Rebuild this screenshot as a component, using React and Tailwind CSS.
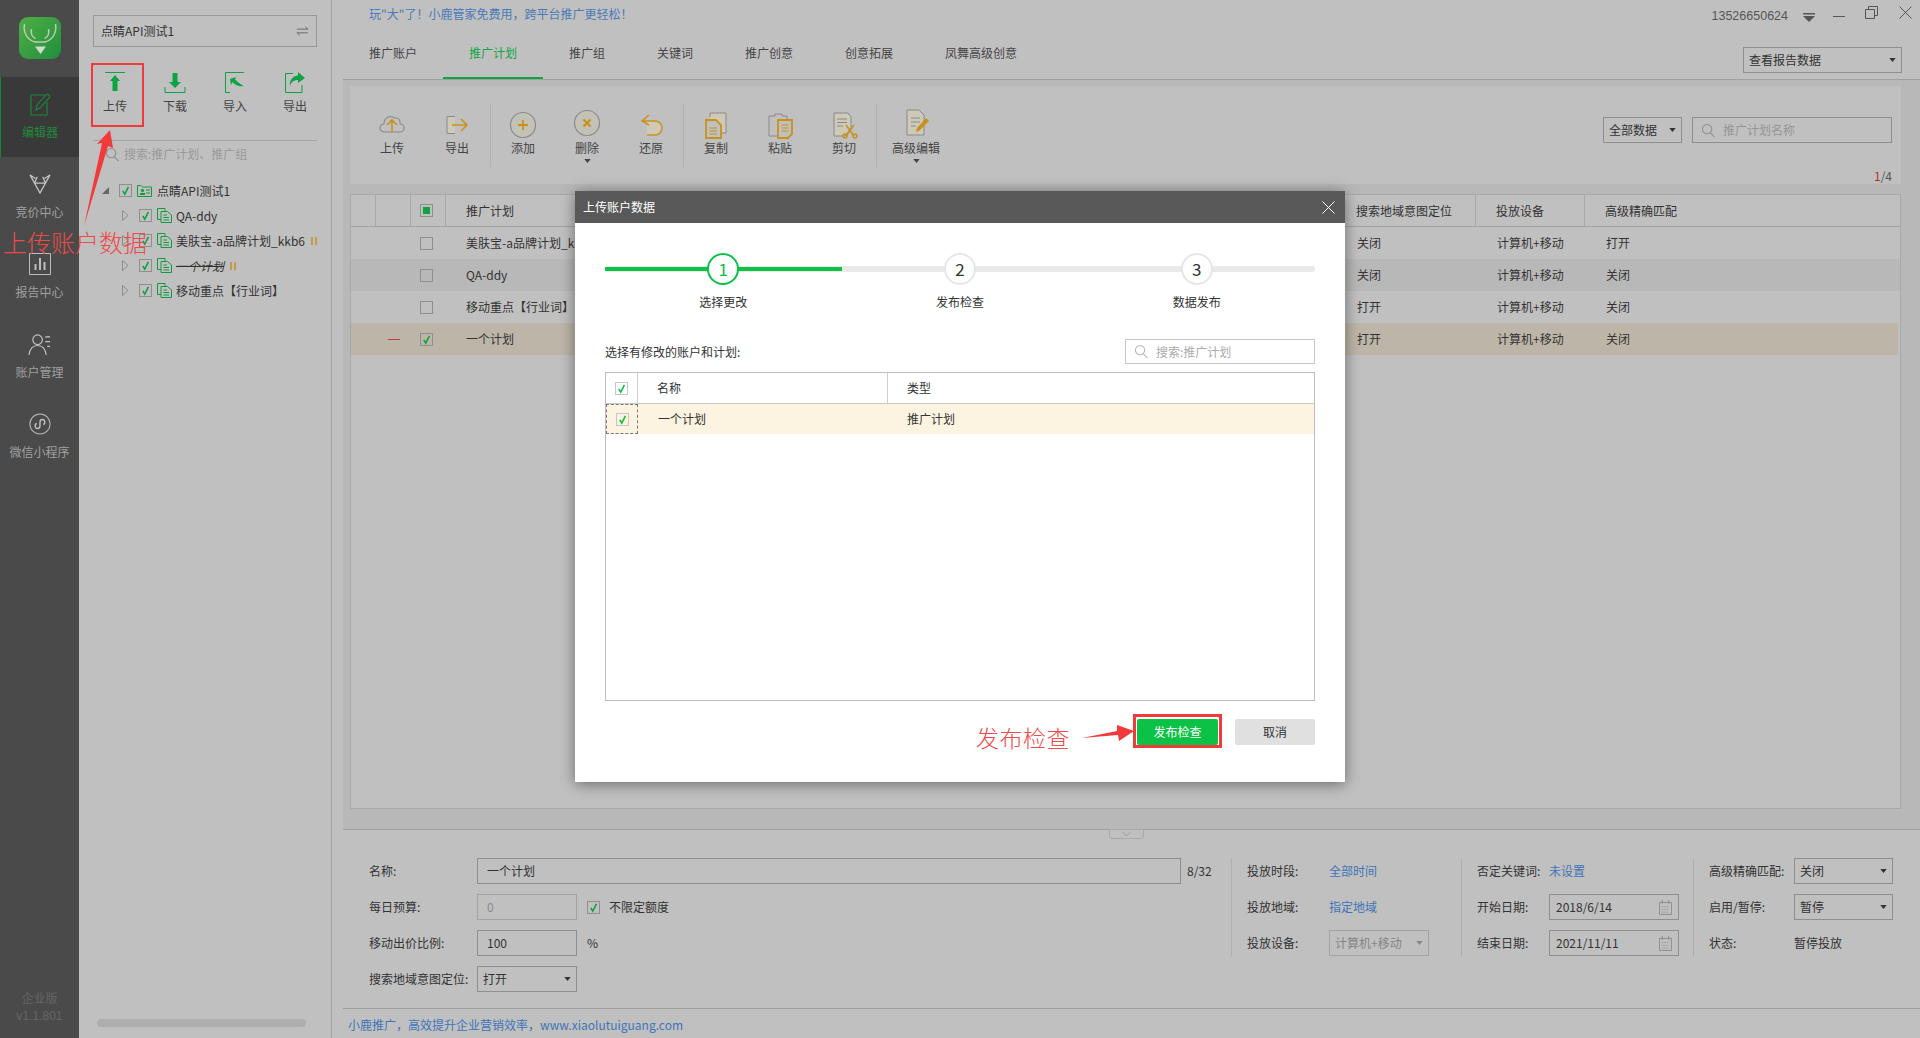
const Check = ({ color = "#0da342" }) => (
  <svg viewBox="0 0 12 12" className="h-full w-full" fill="none" aria-hidden>
    <path d="M3 6.5 L5.2 10 L9.2 2" stroke={color} strokeWidth="1.7" />
  </svg>
);

const Box = ({ checked, color, border = "border-[#8f8f8f]" }) => (
  <span className={`block h-[13px] w-[13px] shrink-0 border ${border}`}>
    {checked && <Check color={color} />}
  </span>
);

const Caret = ({ color = "#333" }) => (
  <svg viewBox="0 0 8 5" className="h-[4px] w-[7px]" aria-hidden>
    <path d="M0 0 H8 L4 5 Z" fill={color} />
  </svg>
);

const Lens = ({ color = "#8e8e8e" }) => (
  <svg viewBox="0 0 16 16" className="h-[15px] w-[15px] shrink-0" fill="none" stroke={color} strokeWidth="1.1" aria-hidden>
    <circle cx="6.5" cy="6.5" r="5" />
    <path d="M10 10.5 L14.5 15" />
  </svg>
);

const SideItem = ({ label, active, children }) => (
  <div className={`flex h-[80px] flex-col items-center pt-[14px] ${active ? "border-l border-[#128a3a] bg-[#393939] text-[#1f8a3c]" : "text-[#a0a0a0]"}`}>
    <div className="flex h-[26px] items-center justify-center">{children}</div>
    <div className="mt-[6px] whitespace-nowrap leading-[18px]">{label}</div>
  </div>
);

const Sidebar = () => (
  <aside className="flex w-[79px] shrink-0 flex-col bg-[#4a4a4a]">
    <div className="flex h-[77px] items-start justify-center pt-[17px]">
      <div className="h-[42px] w-[42px] overflow-hidden rounded-[9px] bg-linear-to-br from-[#4fae45] to-[#1c8f3c]">
        <svg viewBox="0 0 42 42" fill="none" className="h-full w-full" aria-hidden>
          <path d="M5.5 7 C4 15 8 23 16 25 M36.5 7 C38 15 34 23 26 25 M16 25 H26 M12.5 12 C11.5 17 13 20 16.5 21.5 M29.5 12 C30.5 17 29 20 25.5 21.5" stroke="#bccbb6" strokeWidth="1.5" />
          <path d="M16 29.5 H27 L21.5 37 Z" fill="#d3ddcf" />
        </svg>
      </div>
    </div>
    <SideItem label="编辑器" active>
      <svg viewBox="0 0 24 24" className="h-[24px] w-[24px]" fill="none" stroke="#1a8a3d" strokeWidth="1.1" aria-hidden>
        <path d="M19 10 V23 H3 V3 H17" />
        <path d="M8 18 L9 13 L18 3 C20 1 23 4 21 6 L12 16 Z" />
      </svg>
    </SideItem>
    <SideItem label="竞价中心">
      <svg viewBox="0 0 24 22" className="h-[20px] w-[24px]" fill="none" stroke="#c4c4c4" strokeWidth="1.4" aria-hidden>
        <path d="M1 1 L12 21 L23 1 M6 10 H18 M1 1 L7 5 M23 1 L17 5 M6 10 L9 3 M18 10 L15 3" />
      </svg>
    </SideItem>
    <SideItem label="报告中心">
      <svg viewBox="0 0 22 22" className="h-[22px] w-[22px]" fill="none" stroke="#bdbdbd" aria-hidden>
        <path d="M0.5 0.5 H21.5 V21.5 H0.5 Z" />
        <path d="M6.5 17 V11 M11 17 V5 M15.5 17 V9" strokeWidth="2" />
      </svg>
    </SideItem>
    <SideItem label="账户管理">
      <svg viewBox="0 0 24 24" className="h-[23px] w-[23px]" fill="none" stroke="#c4c4c4" strokeWidth="1.2" aria-hidden>
        <circle cx="10" cy="7" r="5" />
        <path d="M1 23 C2 15 6 13 10 13 C14 13 18 15 19 23 M18 4 H23 M18 9 H23 M20 14 H23" />
      </svg>
    </SideItem>
    <SideItem label="微信小程序">
      <svg viewBox="0 0 24 24" className="h-[22px] w-[22px]" fill="none" stroke="#bdbdbd" aria-hidden>
        <circle cx="12" cy="12" r="11" strokeWidth="1.1" />
        <path d="M8.5 11.5 C6 12 6 17 9.5 17 C11.5 17 12 15 12 14 V10 C12 9 12.5 7 14.5 7 C18 7 18 12 15.5 12.5" strokeWidth="1.6" />
      </svg>
    </SideItem>
    <div className="mt-auto pb-[12px] text-center text-[#666] leading-[19px]">
      <div>企业版</div>
      <div className="font-['Liberation_Sans',sans-serif]">v1.1.801</div>
    </div>
  </aside>
);

const ToolIcon = ({ children }) => (
  <svg viewBox="0 0 22 22" className="h-[22px] w-[22px]" fill="none" stroke="#0da342" aria-hidden>
    {children}
  </svg>
);

const SideTool = ({ label, children }) => (
  <div className="flex w-[60px] flex-col items-center">
    <ToolIcon>{children}</ToolIcon>
    <div className="mt-[3px] leading-[18px] text-[#444]">{label}</div>
  </div>
);

const TreeDoc = () => (
  <svg viewBox="0 0 15 15" className="h-[15px] w-[15px] shrink-0" fill="none" stroke="#129a42" aria-hidden>
    <path d="M4 11.5 H0.5 V0.5 H8 V3" />
    <path d="M4 3.5 H10.5 L14.5 7 V14.5 H4 Z M6.5 7 H10 M6.5 9.5 H12 M6.5 12 H12" />
  </svg>
);

const TreeRow = ({ children, pause }) => (
  <div className="flex h-[25px] items-center pl-[43px]">
    <svg viewBox="0 0 7 11" className="h-[11px] w-[7px] shrink-0" fill="none" stroke="#8c8c8c" aria-hidden>
      <path d="M0.5 0.5 L6 5.5 L0.5 10.5 Z" />
    </svg>
    <span className="ml-[10px]">
      <Box checked />
    </span>
    <span className="ml-[5px]">
      <TreeDoc />
    </span>
    <span className="ml-[4px] whitespace-nowrap">{children}</span>
    {pause && <span className="ml-[6px] h-[8px] w-[6px] shrink-0 border-x-2 border-[#c49a4a]" />}
  </div>
);

const Panel = () => (
  <section className="flex w-[253px] shrink-0 flex-col border-r border-[#a3a3a3] bg-[#c0c0c0] pt-[15px]">
    <div className="ml-[14px] flex h-[32px] w-[224px] items-center justify-between border border-[#989898] pl-[7px] pr-[7px]">
      <span>点睛API测试1</span>
      <svg viewBox="0 0 14 10" className="h-[10px] w-[13px]" fill="none" stroke="#666" aria-hidden>
        <path d="M1 3 H13 L10 0.5 M13 7 H1 L4 9.5" />
      </svg>
    </div>
    <div className="ml-[6px] mt-[25px] flex">
      <SideTool label="上传">
        <path d="M1 0.5 H21" />
        <path d="M11 3 L16 9 H13.5 V19 H8.5 V9 H6 Z" fill="#0da342" stroke="none" />
      </SideTool>
      <SideTool label="下载">
        <path d="M8.5 1 H13.5 V10 H17 L11 16 L5 10 H8.5 Z" fill="#0da342" stroke="none" />
        <path d="M1 15 V20.5 H21 V15" />
      </SideTool>
      <SideTool label="导入">
        <path d="M1.5 20.5 V0.5 H20 M1.5 20.5 H6" />
        <path d="M6 7 L12 5 L11 7.5 C14 10 17 13 20 14 C15 15 11 13 8.5 10 L7 13 Z" fill="#0da342" stroke="none" />
      </SideTool>
      <SideTool label="导出">
        <path d="M9 1.5 H1.5 V20.5 H18 V13" />
        <path d="M14 0 L21 6 L14 11 V8 C10 8 7 10 6 14 C5 8 9 4 14 3.5 Z" fill="#0da342" stroke="none" />
      </SideTool>
    </div>
    <div className="mx-[14px] mt-[25px] flex h-[27px] items-center gap-[4px] border-t border-[#a3a3a3] pl-[12px] text-[#999]">
      <Lens />
      <span className="whitespace-nowrap">搜索:推广计划、推广组</span>
    </div>
    <div className="mt-[11px]">
      <div className="flex h-[25px] items-center pl-[23px]">
        <span className="h-0 w-0 border-b-[7px] border-l-[7px] border-b-[#666] border-l-transparent" />
        <span className="ml-[10px]">
          <Box checked />
        </span>
        <svg viewBox="0 0 15 12" className="ml-[5px] h-[12px] w-[15px]" fill="none" stroke="#129a42" aria-hidden>
          <path d="M0.5 0.5 H4 L5.5 2 H14.5 V11.5 H0.5 Z M9 5 H13 M9 8 H13" />
          <circle cx="5.5" cy="5.5" r="1.2" fill="#129a42" />
          <path d="M3 9 H8" strokeWidth="2" />
        </svg>
        <span className="ml-[5px]">点睛API测试1</span>
      </div>
      <TreeRow>QA-ddy</TreeRow>
      <TreeRow pause>美肤宝-a品牌计划_kkb6</TreeRow>
      <TreeRow pause>
        <span className="italic line-through">一个计划</span>
      </TreeRow>
      <TreeRow>移动重点【行业词】</TreeRow>
    </div>
    <div className="mb-[11px] ml-[18px] mt-auto h-[8px] w-[209px] rounded-full bg-[#aeaeae]" />
  </section>
);

const Select = ({ label, width = "w-[100px]", disabled }) => (
  <div className={`flex h-[26px] shrink-0 items-center justify-between border px-[5px] ${width} ${disabled ? "border-[#a3a3a3] text-[#858585]" : "border-[#8f8f8f]"}`}>
    <span className="whitespace-nowrap">{label}</span>
    <Caret color={disabled ? "#858585" : "#333"} />
  </div>
);

const Tools = ({ label, caret, width = "w-[64px]", up, children }) => (
  <div className={`relative flex h-[64px] shrink-0 flex-col items-center pt-[8px] ${width}`}>
    <svg viewBox="0 0 28 28" className={`h-[28px] w-[28px] ${up ? "-mt-[2px]" : ""}`} fill="none" aria-hidden>
      {children}
    </svg>
    <div className={`whitespace-nowrap leading-[18px] text-[#444] ${up ? "mt-[2px]" : ""}`}>{label}</div>
    {caret && (
      <div className="mt-[2px] flex justify-center">
        <Caret color="#444" />
      </div>
    )}
  </div>
);

const Sep = () => <div className="h-[64px] w-px shrink-0 bg-[#b2b2b2]" />;

const G = "#8a8a8a";
const Y = "#c8921a";
const B = "#cfc9b8";

const Toolbar = () => (
  <div className="flex h-[98px] shrink-0 bg-[#c0c0c0] pl-[10px] pr-[9px]">
    <div className="mt-[17px] flex h-[64px]">
      <Tools label="上传">
        <path d="M7 22 C1 22 0 15 6 14 C6 7 13 5 16 8 C20 7 23 10 22 14 C27 14 28 22 22 22 Z" stroke={G} strokeWidth="1.1" transform="translate(0 -1)" />
        <path d="M14 21 V10 M9 14 L14 9 L19 14" stroke={Y} strokeWidth="1.6" />
      </Tools>
      <Tools label="导出" width="w-[66px]">
        <path d="M4 5.5 H12 V22.5 H4 Z" fill={B} stroke="none" />
        <path d="M12 5.5 H4 V22.5 H12" stroke={G} />
        <path d="M9 14 H23 M18 8 L24 14 L18 20" stroke={Y} strokeWidth="1.6" />
      </Tools>
      <Sep />
      <Tools label="添加">
        <circle cx="14" cy="14" r="12.5" stroke={G} strokeWidth="1.2" fill="#c4c1b6" />
        <path d="M14 9 V19 M9 14 H19" stroke={Y} strokeWidth="1.8" />
      </Tools>
      <Tools label="删除" caret up>
        <circle cx="14" cy="14" r="12.5" stroke={G} strokeWidth="1.2" fill="#c4c1b6" />
        <path d="M10.5 10.5 L17.5 17.5 M17.5 10.5 L10.5 17.5" stroke={Y} strokeWidth="2.2" />
      </Tools>
      <Tools label="还原">
        <path d="M9 11 H18 C23 11 24 15 24 17 C24 21 21 24 18 24 H10 V11 Z" fill={B} stroke="none" />
        <path d="M12 4 L5 10 L12 14 M5 10 H18 C22 10 25 13 25 17 C25 21 22 24 18 24 H10" stroke={Y} strokeWidth="1.5" />
      </Tools>
      <Sep />
      <Tools label="复制">
        <path d="M8 2 H24 V22 H8 Z" fill={B} stroke="none" />
        <path d="M8 6 V2 H24 V22 H20" stroke={G} />
        <path d="M4 9 H14 L19 14 V27 H4 Z" fill="#c0c0c0" stroke={Y} strokeWidth="1.8" />
        <path d="M7.5 17 H15 M7.5 20 H15 M7.5 23 H15" stroke={Y} />
      </Tools>
      <Tools label="粘贴">
        <path d="M3 5 H9 V3 H16 V5 H21 V9 H12 V25 H3 Z" stroke={G} />
        <path d="M12 9 H26 V23 L22 27 H12 Z" fill="#c0c0c0" stroke={Y} strokeWidth="1.8" />
        <path d="M15.5 14 H22.5 M15.5 17 H22.5 M15.5 20 H22.5" stroke={Y} />
      </Tools>
      <Tools label="剪切">
        <path d="M4 2 H18 L21 6 V17 L15 25 H4 Z" fill={B} stroke={G} />
        <path d="M7 8 H17 M7 11.5 H17 M7 15 H13" stroke={G} />
        <path d="M16 14 L24 25 M24 14 L16 25" stroke={Y} strokeWidth="1.5" />
        <circle cx="15" cy="25" r="2" stroke={Y} strokeWidth="1.4" />
        <circle cx="25" cy="25" r="2" stroke={Y} strokeWidth="1.4" />
      </Tools>
      <Sep />
      <Tools label="高级编辑" caret up width="w-[78px]">
        <path d="M5 1 H17 L22 6 V26 H5 Z" fill={B} stroke={G} />
        <path d="M9 9 H18 M9 13 H18 M9 17 H14" stroke={G} />
        <path d="M14 23 L15 19 L24 9 L27 12 L17 22 Z" fill={Y} />
      </Tools>
    </div>
    <div className="ml-auto flex flex-col items-end pt-[31px]">
      <div className="flex gap-[10px]">
        <Select label="全部数据" width="w-[79px]" />
        <div className="flex h-[26px] w-[200px] items-center gap-[7px] border border-[#8f8f8f] pl-[8px] text-[#969696]">
          <Lens />
          <span>推广计划名称</span>
        </div>
      </div>
      <div className="mt-[24px] leading-[18px] text-[#555]">
        <span className="text-[#a33]">1</span>/4
      </div>
    </div>
  </div>
);

const plans = [
  { name: "美肤宝-a品牌计划_kkb6", a: "关闭", b: "打开" },
  { name: "QA-ddy", a: "关闭", b: "关闭", bg: "bg-[#b8b8b8]" },
  { name: "移动重点【行业词】", a: "打开", b: "关闭" },
  { name: "一个计划", a: "打开", b: "关闭", bg: "bg-[#bdb6a8]", on: true },
];

const PlanTable = () => (
  <div className="mt-[10px] flex h-[615px] flex-col border border-[#a9a9a9] bg-[#c0c0c0]">
    <div className="flex h-[32px] shrink-0 border-b border-[#a3a3a3]">
      <div className="w-[25px] border-r border-[#a9a9a9]" />
      <div className="w-[35px] border-r border-[#a9a9a9]" />
      <div className="flex w-[35px] items-center border-r border-[#a9a9a9] pl-[9px]">
        <span className="flex h-[13px] w-[13px] items-center justify-center border border-[#8f8f8f]">
          <span className="h-[7px] w-[7px] bg-[#0da342]" />
        </span>
      </div>
      <div className="flex w-[890px] items-center pl-[20px]">推广计划</div>
      <div className="flex w-[140px] items-center border-r border-[#a9a9a9] pl-[20px]">搜索地域意图定位</div>
      <div className="flex w-[109px] items-center border-r border-[#a9a9a9] pl-[20px]">投放设备</div>
      <div className="flex flex-1 items-center pl-[20px]">高级精确匹配</div>
    </div>
    {plans.map((p) => (
      <div key={p.name} className={`flex h-[32px] shrink-0 items-center ${p.bg || ""} ${p.on ? "mr-[2px]" : ""}`}>
        <div className="w-[25px]" />
        <div className="flex w-[35px] justify-center">
          {p.on && <span className="block h-px w-[12px] bg-[#b0453f]" />}
        </div>
        <div className="flex w-[35px] pl-[9px]">
          <Box checked={p.on} />
        </div>
        <div className="w-[890px] pl-[20px]">{p.name}</div>
        <div className="w-[140px] pl-[21px]">{p.a}</div>
        <div className="w-[109px] pl-[21px]">计算机+移动</div>
        <div className="pl-[21px]">{p.b}</div>
      </div>
    ))}
  </div>
);

const Field = ({ children, width = "w-[100px]", pad = "px-[9px]", muted }) => (
  <div className={`flex h-[26px] shrink-0 items-center border ${width} ${pad} ${muted ? "border-[#a3a3a3] text-[#8a8a8a]" : "border-[#8f8f8f]"}`}>{children}</div>
);

const Row = ({ label, width, children }) => (
  <div className="flex h-[26px] items-center">
    <div className="shrink-0 whitespace-nowrap" style={{ width }}>
      {label}
    </div>
    {children}
  </div>
);

const Cal = () => (
  <svg viewBox="0 0 14 16" className="ml-auto h-[15px] w-[13px] shrink-0" fill="none" stroke="#8a8a8a" aria-hidden>
    <path d="M0.5 2.5 H13.5 V15.5 H0.5 Z M3.5 0 V4 M10.5 0 V4" />
    <path d="M3 7 H11 M3 10 H11 M3 13 H11" strokeDasharray="1 1" />
  </svg>
);

const Link = ({ children }) => <span className="text-[#3f74b8]">{children}</span>;

const BottomForm = () => (
  <div className="relative flex h-[179px] shrink-0 border-t border-[#a0a0a0] pt-[28px]">
    <div className="absolute left-[766px] top-[-1px] flex h-[10px] w-[35px] items-center justify-center rounded-b-[3px] border border-[#a9a9a9]">
      <svg viewBox="0 0 10 5" className="h-[4px] w-[9px]" fill="none" stroke="#8f8f8f" aria-hidden>
        <path d="M0 0 L5 5 L10 0" />
      </svg>
    </div>
    <div className="flex w-[888px] shrink-0 flex-col gap-[10px] pl-[26px]">
      <Row label="名称:" width="108px">
        <Field width="w-[704px]">一个计划</Field>
        <span className="ml-[6px]">8/32</span>
      </Row>
      <Row label="每日预算:" width="108px">
        <Field muted>0</Field>
        <span className="ml-[10px]">
          <Box checked />
        </span>
        <span className="ml-[9px]">不限定额度</span>
      </Row>
      <Row label="移动出价比例:" width="108px">
        <Field>100</Field>
        <span className="ml-[10px]">%</span>
      </Row>
      <Row label="搜索地域意图定位:" width="108px">
        <Select label="打开" />
      </Row>
    </div>
    <div className="flex h-[99px] w-[230px] shrink-0 flex-col gap-[10px] border-l border-[#b0b0b0] pl-[15px]">
      <Row label="投放时段:" width="82px">
        <Link>全部时间</Link>
      </Row>
      <Row label="投放地域:" width="82px">
        <Link>指定地域</Link>
      </Row>
      <Row label="投放设备:" width="82px">
        <Select label="计算机+移动" disabled />
      </Row>
    </div>
    <div className="flex h-[99px] w-[232px] shrink-0 flex-col gap-[10px] border-l border-[#b0b0b0] pl-[15px]">
      <Row label="否定关键词:" width="72px">
        <Link>未设置</Link>
      </Row>
      <Row label="开始日期:" width="72px">
        <Field width="w-[130px]" pad="px-[6px]">
          2018/6/14
          <Cal />
        </Field>
      </Row>
      <Row label="结束日期:" width="72px">
        <Field width="w-[130px]" pad="px-[6px]">
          2021/11/11
          <Cal />
        </Field>
      </Row>
    </div>
    <div className="flex h-[99px] shrink-0 flex-col gap-[10px] border-l border-[#b0b0b0] pl-[15px]">
      <Row label="高级精确匹配:" width="85px">
        <Select label="关闭" width="w-[99px]" />
      </Row>
      <Row label="启用/暂停:" width="85px">
        <Select label="暂停" width="w-[99px]" />
      </Row>
      <Row label="状态:" width="85px">
        <span>暂停投放</span>
      </Row>
    </div>
  </div>
);

const tabs = ["推广账户", "推广计划", "推广组", "关键词", "推广创意", "创意拓展", "凤舞高级创意"];

const Header = () => (
  <header className="flex h-[80px] shrink-0 flex-col border-b border-[#a0a0a0]">
    <div className="flex h-[29px] items-start justify-between">
      <div className="pl-[26px] pt-[5px] leading-[18px] text-[#4a7ab8]">玩"大"了！小鹿管家免费用，跨平台推广更轻松！</div>
      <div className="flex items-start pr-[8px] pt-[5px] text-[#555]">
        <span className="mt-[2px] font-['Liberation_Sans',sans-serif] text-[12.5px] leading-[18px]">13526650624</span>
        <svg viewBox="0 0 12 9" className="ml-[15px] mt-[8px] h-[9px] w-[12px]" aria-hidden>
          <path d="M0 0 H12 V1.5 H0 Z M0 3 H12 L6 9 Z" fill="#555" />
        </svg>
        <span className="ml-[18px] mt-[11px] h-px w-[12px] bg-[#555]" />
        <svg viewBox="0 0 13 13" className="ml-[20px] mt-px h-[13px] w-[13px]" fill="none" stroke="#555" aria-hidden>
          <path d="M0.5 3.5 H9.5 V12.5 H0.5 Z M3.5 3.5 V0.5 H12.5 V9.5 H9.5" />
        </svg>
        <svg viewBox="0 0 13 13" className="ml-[21px] mt-px h-[13px] w-[13px]" fill="none" stroke="#555" aria-hidden>
          <path d="M0.5 0.5 L12.5 12.5 M12.5 0.5 L0.5 12.5" />
        </svg>
      </div>
    </div>
    <div className="flex flex-1 items-stretch">
      {tabs.map((t, i) => (
        <div key={t} className={`flex items-center border-b-2 px-[26px] ${i === 1 ? "border-[#10a544] text-[#10a544]" : "border-transparent text-[#444]"}`}>
          {t}
        </div>
      ))}
      <div className="ml-auto mr-[18px] mt-[18px]">
        <Select label="查看报告数据" width="w-[159px]" />
      </div>
    </div>
  </header>
);

const Steps = () => (
  <div className="relative mt-[30px] grid grid-cols-3">
    <div className="absolute left-0 right-0 top-[13px] h-[6px] rounded-full bg-[#e9e9e9]" />
    <div className="absolute left-0 top-[14px] h-[4px] w-[237px] bg-[#0bc246]" />
    {[
      ["1", "选择更改"],
      ["2", "发布检查"],
      ["3", "数据发布"],
    ].map(([n, label], i) => (
      <div key={n} className="relative flex flex-col items-center">
        <div className={`flex h-[32px] w-[32px] items-center justify-center rounded-full border-2 bg-white text-[17px] ${i === 0 ? "border-[#0bc246] text-[#0bc246]" : "border-[#e6e6e6] text-[#333]"}`}>
          {n}
        </div>
        <div className="mt-[8px] leading-[18px]">{label}</div>
      </div>
    ))}
  </div>
);

const Dialog = () => (
  <div className="absolute left-[575px] top-[191px] flex h-[591px] w-[770px] flex-col bg-white shadow-[0_2px_14px_rgba(0,0,0,0.45)]">
    <div className="flex h-[32px] shrink-0 items-center justify-between bg-[#595959] pl-[8px] pr-[10px] text-white">
      <span>上传账户数据</span>
      <svg viewBox="0 0 13 13" className="h-[13px] w-[13px]" fill="none" stroke="#fff" aria-hidden>
        <path d="M0.5 0.5 L12.5 12.5 M12.5 0.5 L0.5 12.5" />
      </svg>
    </div>
    <div className="flex flex-1 flex-col px-[30px]">
      <Steps />
      <div className="mt-[28px] flex h-[25px] items-center justify-between">
        <span>选择有修改的账户和计划:</span>
        <div className="flex h-[25px] w-[190px] items-center gap-[7px] border border-[#c6c6c6] pl-[8px] text-[#aaa]">
          <Lens color="#b5b5b5" />
          <span>搜索:推广计划</span>
        </div>
      </div>
      <div className="mt-[8px] h-[329px] border border-[#bdbdbd]">
        <div className="flex h-[31px] border-b border-[#c8c8c8]">
          <div className="flex w-[32px] items-center justify-center border-r border-[#cfcfcf]">
            <Box checked color="#0bc246" border="border-[#c6c6c6]" />
          </div>
          <div className="flex w-[250px] items-center border-r border-[#cfcfcf] pl-[19px]">名称</div>
          <div className="flex items-center pl-[19px]">类型</div>
        </div>
        <div className="flex h-[30px] items-center bg-[#fdf3e1]">
          <div className="flex h-full w-[32px] items-center justify-center border border-dashed border-[#777]">
            <Box checked color="#0bc246" border="border-[#c6c6c6]" />
          </div>
          <div className="w-[250px] pl-[20px]">一个计划</div>
          <div className="pl-[19px]">推广计划</div>
        </div>
      </div>
      <div className="mt-[18px] flex justify-end gap-[17px]">
        <div className="flex h-[26px] w-[81px] items-center justify-center rounded-[2px] bg-[#0bc246] text-white">发布检查</div>
        <div className="flex h-[26px] w-[80px] items-center justify-center rounded-[2px] bg-[#e0e0e0]">取消</div>
      </div>
    </div>
  </div>
);

const Notes = () => (
  <>
    <div className="absolute left-[91px] top-[63px] h-[64px] w-[53px] border-2 border-[#f23a3a]" />
    <svg viewBox="0 0 40 100" className="absolute left-[80px] top-[128px] h-[100px] w-[40px]" aria-hidden>
      <path d="M30 2 L33 20 L28 18 L4 98 L22 15 L17 16 Z" fill="#f23a3a" />
    </svg>
    <div className="absolute left-[3px] top-[224px] text-[24px] font-light leading-[36px] whitespace-nowrap text-[#ee4a4a]">上传账户数据</div>
    <div className="absolute left-[1133px] top-[714px] h-[34px] w-[89px] border-[3px] border-[#f23a3a]" />
    <svg viewBox="0 0 53 18" className="absolute left-[1081px] top-[724px] h-[18px] w-[53px]" aria-hidden>
      <path d="M1 14 L36 7 L36 1 L53 7 L38 17 L37 11 Z" fill="#f23a3a" />
    </svg>
    <div className="absolute left-[976px] top-[719px] text-[23px] font-light leading-[36px] tracking-[0.5px] whitespace-nowrap text-[#ee4a4a]">发布检查</div>
  </>
);

export default function App() {
  return (
    <div className="relative flex h-[1038px] w-[1920px] overflow-hidden bg-[#c0c0c0] font-['Noto_Sans_CJK_SC','Noto_Sans',sans-serif] text-[12px] text-[#333]">
      <Sidebar />
      <Panel />
      <main className="flex min-w-0 flex-1 flex-col pl-[11px]">
        <Header />
        <div className="h-[749px] shrink-0 bg-[#b8b8b8] pl-[7px] pr-[19px] pt-[6px]">
          <Toolbar />
          <PlanTable />
        </div>
        <BottomForm />
        <div className="flex-1 border-t border-[#a0a0a0] pl-[5px] pt-[7px] text-[#3f74b8]">
          小鹿推广，高效提升企业营销效率，www.xiaolutuiguang.com
        </div>
      </main>
      <Dialog />
      <Notes />
    </div>
  );
}
